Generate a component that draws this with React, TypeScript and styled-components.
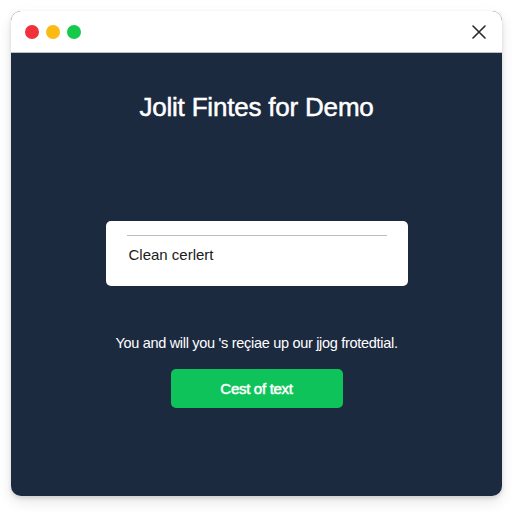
import styled, { createGlobalStyle } from "styled-components";

const GlobalStyle = createGlobalStyle`
  html, body {
    margin: 0;
    padding: 0;
    background: #ffffff;
    font-family: "Liberation Sans", Arial, sans-serif;
  }
`;

const Page = styled.div`
  width: 512px;
  height: 512px;
  padding: 11px 10px 16px 11px;
  box-sizing: border-box;
  display: flex;
`;

const Window = styled.div`
  flex: 1;
  display: flex;
  flex-direction: column;
  border-radius: 10px;
  overflow: hidden;
  background: #1c2a40;
  box-shadow: 0 2px 4px rgba(0, 0, 0, 0.12), 0 6px 14px rgba(0, 0, 0, 0.1);
`;

const TitleBar = styled.div`
  height: 42px;
  flex-shrink: 0;
  background: #ffffff;
  border-bottom: 1px solid #b9c0c8;
  box-sizing: border-box;
  display: flex;
  align-items: center;
  justify-content: space-between;
  padding: 0 15px 0 14px;
`;

const Dots = styled.div`
  display: flex;
  gap: 7px;
`;

const Dot = styled.span<{ $color: string }>`
  width: 14px;
  height: 14px;
  border-radius: 50%;
  background: ${(p) => p.$color};
`;

const Close = styled.button`
  border: none;
  background: none;
  padding: 0;
  width: 16px;
  height: 16px;
  display: flex;
  align-items: center;
  justify-content: center;
  color: #2a2a2a;
`;

const Content = styled.div`
  flex: 1;
  display: flex;
  flex-direction: column;
  align-items: center;
  padding-top: 38px;
`;

const Title = styled.h1`
  margin: 0;
  font-family: "Liberation Sans", Arial, sans-serif;
  font-size: 26px;
  line-height: 32px;
  font-weight: 400;
  color: #ffffff;
  letter-spacing: -0.2px;
  -webkit-text-stroke: 0.5px #ffffff;
`;

const Card = styled.div`
  margin-top: 98px;
  width: 302px;
  height: 65px;
  background: #ffffff;
  border-radius: 5px;
  box-sizing: border-box;
  padding: 14px 21px 0 21px;
  display: flex;
  flex-direction: column;
`;

const Rule = styled.div`
  height: 1px;
  background: #bdbdbd;
`;

const CardText = styled.div`
  margin-top: 10px;
  padding-left: 2px;
  font-size: 15px;
  line-height: 18px;
  color: #202020;
`;

const Note = styled.p`
  margin: 47px 0 0 0;
  font-size: 14.5px;
  line-height: 20px;
  color: #ffffff;
  letter-spacing: -0.3px;
`;

const Action = styled.button`
  margin-top: 16px;
  width: 172px;
  height: 39px;
  border: none;
  border-radius: 5px;
  background: #0ec45a;
  color: #ffffff;
  font-family: "Liberation Sans", Arial, sans-serif;
  font-size: 15px;
  font-weight: 400;
  letter-spacing: -0.3px;
  -webkit-text-stroke: 0.5px #ffffff;
`;

export default function App() {
  return (
    <>
      <GlobalStyle />
      <Page>
        <Window>
          <TitleBar>
            <Dots>
              <Dot $color="#f0303a" />
              <Dot $color="#fbbb12" />
              <Dot $color="#15c94a" />
            </Dots>
            <Close aria-label="Close">
              <svg width="14" height="14" viewBox="0 0 14 14">
                <path
                  d="M1 1 L13 13 M13 1 L1 13"
                  stroke="currentColor"
                  strokeWidth="1.6"
                  strokeLinecap="round"
                />
              </svg>
            </Close>
          </TitleBar>
          <Content>
            <Title>Jolit Fintes for Demo</Title>
            <Card>
              <Rule />
              <CardText>Clean cerlert</CardText>
            </Card>
            <Note>You and will you 's reçiae up our jjog frotedtial.</Note>
            <Action>Cest of text</Action>
          </Content>
        </Window>
      </Page>
    </>
  );
}
